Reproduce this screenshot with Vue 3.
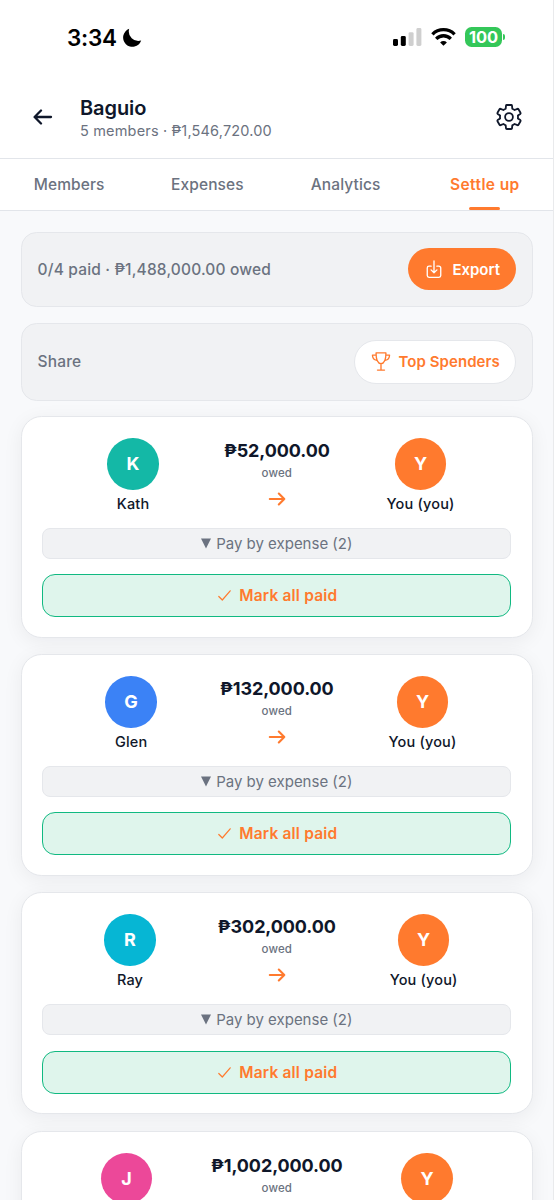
<script setup>
const tabs = ['Members', 'Expenses', 'Analytics', 'Settle up']
const active = 'Settle up'
const debts = [
  { name: 'Kath', amount: '₱52,000.00', tone: 'teal' },
  { name: 'Glen', amount: '₱132,000.00', tone: 'blue' },
  { name: 'Ray', amount: '₱302,000.00', tone: 'cyan' },
  { name: 'J', amount: '₱1,002,000.00', tone: 'pink' },
]
</script>

<template>
  <div class="screen">
    <div class="status">
      <div class="clock">
        <span>3:34</span>
        <svg class="moon" width="20" height="20" viewBox="0 0 20 20"><path d="M7.2.8A9.300 9.300 0 1 0 19.200 12.600 9.600 9.600 0 0 1 7.200.8z" fill="#000" /></svg>
      </div>
      <div class="indicators">
        <svg width="29" height="18" viewBox="0 0 29 18">
          <rect x="0" y="11" width="5" height="7" rx="1.4" />
          <rect x="7.8" y="8" width="5" height="10" rx="1.4" />
          <rect x="15.6" y="4.2" width="5" height="13.8" rx="1.4" fill="#cfcfcf" />
          <rect x="23.4" y="0" width="5" height="18" rx="1.4" fill="#cfcfcf" />
        </svg>
        <svg class="wifi" width="25" height="18" viewBox="0 0 25 18" fill="none" stroke="#000" stroke-width="3.3">
          <path d="M1.400 6.300a15.700 15.700 0 0 1 22.200 0" />
          <path d="M5.200 10.800a10.300 10.300 0 0 1 14.600 0" />
          <path d="M12.500 17.800l-3.400-3.400a4.900 4.900 0 0 1 6.800 0z" fill="#000" stroke="none" />
        </svg>
        <div class="battery"><span>100</span></div>
        <i class="nub"></i>
      </div>
    </div>

    <header class="header">
      <svg class="back" width="20" height="18" viewBox="0 0 20 18" fill="none" stroke="#0f172a" stroke-width="2.3" stroke-linecap="round" stroke-linejoin="round"><path d="M18 9H1.800M8 2.500L1.600 9 8 15.500" /></svg>
      <div class="heading">
        <h1>Baguio</h1>
        <p>5 members · ₱1,546,720.00</p>
      </div>
      <svg class="gear" width="28" height="28" viewBox="-14 -14 28 28" fill="none" stroke="#0f172a" stroke-width="1.8" stroke-linecap="round" stroke-linejoin="round">
        <path d="M-3.300-8.400L-3-11.300Q-2.900-12-2.200-12H2.200Q2.900-12 3-11.300L3.300-8.400Q4.300-7.900 5.600-7L8.400-8.200Q9.100-8.400 9.500-7.800L11.500-4.200Q11.800-3.600 11.300-3.100L8.900-1.400Q9.100 0 8.900 1.400L11.300 3.100Q11.800 3.600 11.500 4.200L9.500 7.800Q9.100 8.400 8.400 8.200L5.600 7Q4.300 7.900 3.300 8.400L3 11.300Q2.900 12 2.200 12H-2.200Q-2.900 12-3 11.300L-3.300 8.400Q-4.300 7.900-5.600 7L-8.400 8.200Q-9.100 8.400-9.500 7.800L-11.500 4.200Q-11.800 3.600-11.300 3.100L-8.900 1.400Q-9.100 0-8.900-1.400L-11.300-3.100Q-11.800-3.600-11.500-4.200L-9.500-7.800Q-9.100-8.400-8.400-8.200L-5.600-7Q-4.300-7.900-3.300-8.400z" />
        <circle r="3.900" />
      </svg>
    </header>

    <nav class="tabs">
      <div v-for="t in tabs" :key="t" class="tab" :class="{ active: t === active }">{{ t }}</div>
    </nav>

    <main class="content">
      <section class="panel summary">
        <span>0/4 paid · ₱1,488,000.00 owed</span>
        <button class="export">
          <svg width="16" height="19" viewBox="0 0 16 20" fill="none" stroke="currentColor" stroke-width="1.4" stroke-linecap="round" stroke-linejoin="round"><path d="M5 6.500H2.800A1.900 1.900 0 0 0 .9 8.400v8a1.900 1.900 0 0 0 1.900 1.900h10.400a1.900 1.900 0 0 0 1.900-1.900v-8a1.900 1.900 0 0 0-1.900-1.900H11M8 1v12.500M4.900 10.400L8 13.500l3.100-3.100" /></svg>
          <span>Export</span>
        </button>
      </section>
      <section class="panel share">
        <span>Share</span>
        <button class="top">
          <svg width="20" height="19" viewBox="0 0 20 20" fill="none" stroke="currentColor" stroke-width="1.4" stroke-linecap="round" stroke-linejoin="round"><path d="M4.800 1h10.400c0 6.600-1.400 11.200-5.200 11.200S4.800 7.600 4.800 1zM4.800 3.200H1C1 6.500 2.400 8.400 5.600 8.800M15.200 3.200H19c0 3.300-1.400 5.200-4.600 5.600M10 12.200V19M6.300 19h7.400" /></svg>
          <span>Top Spenders</span>
        </button>
      </section>

      <article v-for="d in debts" :key="d.name" class="card">
        <div class="transfer">
          <div class="person">
            <div class="avatar" :class="d.tone">{{ d.name[0] }}</div>
            <div class="name">{{ d.name }}</div>
          </div>
          <div class="middle">
            <div class="amount">{{ d.amount }}</div>
            <div class="owed">owed</div>
            <svg class="arrow" width="18" height="14" viewBox="0 0 18 14" fill="none" stroke="#ff7a2e" stroke-width="2.1" stroke-linecap="round" stroke-linejoin="round"><path d="M1.800 7h14.500M10.800 1.500L16.300 7l-5.500 5.500" /></svg>
          </div>
          <div class="person">
            <div class="avatar">Y</div>
            <div class="name">You (you)</div>
          </div>
        </div>
        <div class="expand">
          <svg width="10" height="11" viewBox="0 0 10 11"><path d="M0 .5h10L5 10.500z" fill="#6b7280" /></svg>
          <span>Pay by expense (2)</span>
        </div>
        <button class="mark">
          <svg width="13" height="11" viewBox="0 0 13 11" fill="none" stroke="currentColor" stroke-width="1.200" stroke-linecap="round" stroke-linejoin="round"><path d="M.8 6.500L4.300 10 12.200.8" /></svg>
          <span>Mark all paid</span>
        </button>
      </article>
    </main>
  </div>
</template>

<style>
body { margin: 0; overflow: hidden; }
</style>

<style scoped>
* { box-sizing: border-box; }
.screen {
  width: 554px; height: 1200px; overflow: hidden;
  display: flex; flex-direction: column;
  background: #fff; border-right: 1px solid #e9eaec;
  font-family: Inter, "Liberation Sans", sans-serif; color: #0f172a;
}
h1, p { margin: 0; }
button { font: inherit; margin: 0; border: 0; padding: 0; }
svg { flex: none; display: block; }
.status { height: 76px; flex: none; display: flex; justify-content: space-between; align-items: center; padding: 0 48px 2px 67px; }
.clock { display: flex; align-items: center; gap: 5px; font-size: 22.500px; font-weight: 600; color: #000; letter-spacing: -.3px; padding-top: 1px; }
.indicators { display: flex; align-items: center; }
.wifi { margin-left: 9px; }
.battery { margin-left: 9px; width: 37px; height: 20px; border-radius: 6.500px; background: #34c759; color: #fff; font-size: 16.500px; font-weight: 700; line-height: 20px; text-align: center; letter-spacing: -.2px; }
.nub { width: 2px; height: 6px; margin-left: 1px; border-radius: 0 2px 2px 0; background: #34c759; }
.header { height: 83px; flex: none; display: flex; align-items: center; padding: 0 30px 0 33px; border-bottom: 1px solid #e2e5ea; }
.heading { margin-left: 27px; flex: 1; padding-top: 1px; }
h1 { font-size: 20px; line-height: 25px; font-weight: 600; letter-spacing: -.1px; }
p { font-size: 14.500px; line-height: 19px; color: #6b7280; letter-spacing: .17px; }
.tabs { height: 52px; flex: none; display: flex; border-bottom: 1px solid #e2e5ea; }
.tab { flex: 1; position: relative; text-align: center; line-height: 51px; font-size: 15.500px; font-weight: 500; color: #6b7280; letter-spacing: .12px; }
.tab.active { left: 1px; color: #ff7a2e; font-weight: 600; letter-spacing: .4px; }
.tab.active::after { content: ""; position: absolute; bottom: 0; left: calc(50% - 15.500px); width: 31px; height: 2.600px; border-radius: 2px; background: #ff7a2e; }
.content { flex: 1; background: #f8f9fb; padding: 20.600px 20px 0 20.600px; display: flex; flex-direction: column; }
.panel { flex: none; display: flex; align-items: center; justify-content: space-between; padding: 0 15.800px 0 16px; margin-bottom: 16px; border: 1px solid #e5e7eb; border-radius: 15.500px; background: #f1f2f4; color: #6b7280; font-size: 15.500px; font-weight: 500; letter-spacing: .16px; }
.summary { height: 75px; }
.share { height: 78px; }
.export, .top { display: flex; align-items: center; justify-content: center; border-radius: 22px; font-weight: 600; font-size: 15px; }
.export { width: 108px; height: 42px; gap: 10px; padding-left: 2px; background: #ff7a2e; color: #fff; }
.top { width: 162px; height: 44px; gap: 8px; letter-spacing: .05px; background: #fff; color: #ff7a2e; border: 1px solid #e5e7eb; }
.card { flex: none; height: 221.600px; margin-bottom: 16.600px; padding: 21px 20.600px 0; border: 1px solid #e5e7eb; border-radius: 20.600px; background: #fff; box-shadow: 0 4px 20px rgba(15, 23, 42, .06); }
.card:nth-of-type(1) { margin-top: -.5px; }
.transfer { display: flex; height: 89.800px; }
.person { flex: 1 1 0; display: flex; flex-direction: column; align-items: center; }
.avatar { width: 51.500px; height: 51.500px; border-radius: 50%; background: #ff7a2e; color: #fff; font-size: 18px; font-weight: 700; line-height: 51.500px; text-align: center; }
.teal { background: #14b8a6; }
.blue { background: #3b82f6; }
.cyan { background: #06b6d4; }
.pink { background: #ec4899; }
.name { margin-top: 5px; font-size: 14.500px; line-height: 18px; font-weight: 500; letter-spacing: .17px; }
.middle { display: flex; flex-direction: column; align-items: center; }
.amount { font-size: 18px; line-height: 25px; font-weight: 700; letter-spacing: -.1px; }
.owed { margin-top: 3px; font-size: 11.500px; line-height: 15px; font-weight: 500; color: #6b7280; letter-spacing: .1px; }
.arrow { margin-top: 11px; }
.expand { height: 31px; display: flex; align-items: center; justify-content: center; gap: 5px; border: 1px solid #e5e7eb; border-radius: 8px; background: #f1f2f4; color: #6b7280; font-size: 15px; }
.mark { width: 100%; height: 43px; margin-top: 15.300px; display: flex; align-items: center; justify-content: center; gap: 8px; padding-left: 2px; border: 1.300px solid #10b981; border-radius: 13px; background: #dff5ec; color: #ff7a2e; font-size: 15.500px; font-weight: 600; letter-spacing: .18px; }
</style>
